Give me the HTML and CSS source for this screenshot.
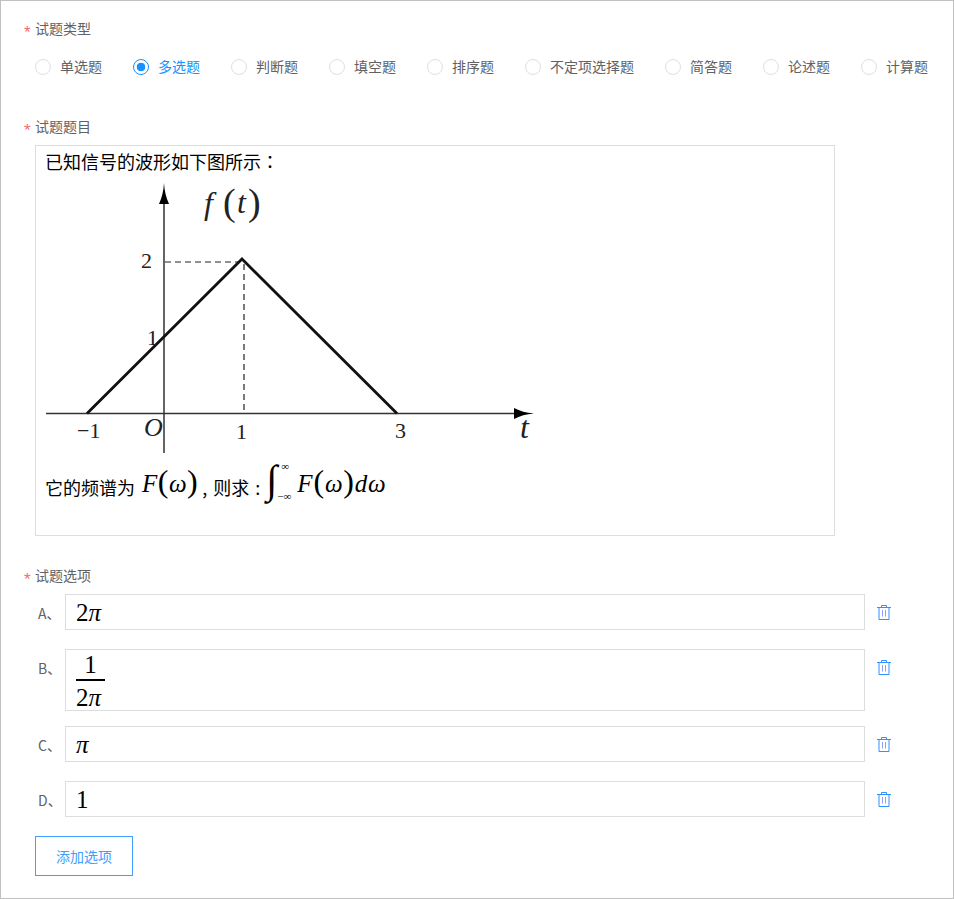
FILE: index.html
```html
<!DOCTYPE html>
<html lang="en">

<head>
    <meta charset="UTF-8">
    <meta name="viewport" content="width=device-width, initial-scale=1.0">
    <title>试题</title>
    <link rel="stylesheet" href="styles.css">
</head>

<body>
    <div class="frame">
        <div class="fieldLabel">试题类型</div>
        <div class="radioRow">
            <div class="radio"><span class="dot"></span>单选题</div>
            <div class="radio checked"><span class="dot"></span>多选题</div>
            <div class="radio"><span class="dot"></span>判断题</div>
            <div class="radio"><span class="dot"></span>填空题</div>
            <div class="radio"><span class="dot"></span>排序题</div>
            <div class="radio"><span class="dot"></span>不定项选择题</div>
            <div class="radio"><span class="dot"></span>简答题</div>
            <div class="radio"><span class="dot"></span>论述题</div>
            <div class="radio"><span class="dot"></span>计算题</div>
        </div>

        <div class="fieldLabel">试题题目</div>
        <div class="editor">
            <div class="line">已知信号的波形如下图所示<span class="colon">：</span></div>
            <svg class="graph" width="490" height="285" viewBox="46 175 490 285">
                <!-- axes -->
                <path d="M46 413.5H520M164 195V453" fill="none" stroke="#333" stroke-width="1.5" />
                <path d="M164 183C164.500 191 166 197 169 204H159C162 197 163.500 191 164 183Z" fill="#000" />
                <path d="M534 413.500C526 413 520 411 514 408V419C520 416 526 414 534 413.500Z" fill="#000" />
                <!-- dashes -->
                <path d="M165 262H240M244 264V413" fill="none" stroke="#222" stroke-width="1.2" stroke-dasharray="6 4" />
                <!-- wave -->
                <path d="M87 413.5L242 259L397 413.5" fill="none" stroke="#111" stroke-width="2.8" />
                <g class="tick">
                    <text x="141" y="268">2</text>
                    <text x="147" y="345">1</text>
                    <text x="77" y="438">−1</text>
                    <text x="236" y="439">1</text>
                    <text x="395" y="438">3</text>
                </g>
                <g class="tickIt">
                    <text x="144" y="436" class="mid">O</text>
                    <text x="520" y="438" class="big">t</text>
                    <text x="204" y="214" class="big">f</text>
                    <text x="237" y="213" class="big">t</text>
                </g>
                <text x="223" y="215" class="paren">(</text>
                <text x="248" y="215" class="paren">)</text>
            </svg>
            <div class="formula">
                <span class="low">它的频谱为</span>
                <span class="math first"><i>F</i><span class="par">(</span><i>ω</i><span class="par">)</span></span>
                <span class="low after">, 则求 :</span>
                <span class="integral">
                    <span class="intSign">∫</span>
                    <span class="limits"><span class="upper">∞</span><span>−∞</span></span>
                </span>
                <span class="math"><i>F</i><span class="par">(</span><i>ω</i><span class="par">)</span><i>d</i><i>ω</i></span>
            </div>
        </div>

        <div class="fieldLabel options">试题选项</div>
        <div class="option">
            <div class="key">A、</div>
            <div class="answer">2<i>π</i></div>
            <svg class="trash" width="14" height="16" viewBox="0 0 14 16"><path d="M0 3.5H14M4.5 3.5V1.5H9.5V3.5M2 3.5V15.5H12V3.5" fill="none" stroke="#3390ff" /><path d="M5.5 6V12.5M8.5 6V12.5" stroke="#8f9dff" /></svg>
        </div>
        <div class="option tall">
            <div class="key">B、</div>
            <div class="answer">
                <div class="frac"><span class="top">1</span><span class="bottom">2<i>π</i></span></div>
            </div>
            <svg class="trash" width="14" height="16" viewBox="0 0 14 16"><path d="M0 3.5H14M4.5 3.5V1.5H9.5V3.5M2 3.5V15.5H12V3.5" fill="none" stroke="#3390ff" /><path d="M5.5 6V12.5M8.5 6V12.5" stroke="#8f9dff" /></svg>
        </div>
        <div class="option">
            <div class="key">C、</div>
            <div class="answer"><i>π</i></div>
            <svg class="trash" width="14" height="16" viewBox="0 0 14 16"><path d="M0 3.5H14M4.5 3.5V1.5H9.5V3.5M2 3.5V15.5H12V3.5" fill="none" stroke="#3390ff" /><path d="M5.5 6V12.5M8.5 6V12.5" stroke="#8f9dff" /></svg>
        </div>
        <div class="option">
            <div class="key">D、</div>
            <div class="answer">1</div>
            <svg class="trash" width="14" height="16" viewBox="0 0 14 16"><path d="M0 3.5H14M4.5 3.5V1.5H9.5V3.5M2 3.5V15.5H12V3.5" fill="none" stroke="#3390ff" /><path d="M5.5 6V12.5M8.5 6V12.5" stroke="#8f9dff" /></svg>
        </div>
        <button class="addBtn">添加选项</button>
    </div>
</body>

</html>
```

FILE: styles.css
```css
body {
    margin: 0;
    font-family: "Noto Sans CJK SC", "Noto Sans", sans-serif;
    font-size: 14px;
    color: #606266;
    background-color: white;
}

.frame {
    box-sizing: border-box;
    width: 954px;
    height: 899px;
    padding: 17px 0 0 34px;
    border: 1px solid #c0c0c0;
}

.fieldLabel {
    position: relative;
    width: 56px;
    height: 20px;
    line-height: 20px;
    font-size: 14px;
    white-space: nowrap;
    margin-bottom: 9px;
}

.fieldLabel::before {
    content: "*";
    position: absolute;
    left: -11px;
    top: 5px;
    color: #f56c6c;
    font-family: "Liberation Sans", sans-serif;
    font-size: 17px;
}

.fieldLabel.options {
    margin-top: 29px;
}

.radioRow {
    display: flex;
    gap: 31px;
    height: 20px;
    margin: 18px 0 40px;
}

.radio {
    display: flex;
    align-items: center;
    line-height: 20px;
    font-size: 14px;
    white-space: nowrap;
}

.dot {
    box-sizing: border-box;
    width: 16px;
    height: 16px;
    margin: 2px 9px 0 0;
    border: 1px solid #dcdfe6;
    border-radius: 50%;
}

.radio.checked {
    color: #1890ff;
}

.radio.checked .dot {
    border-color: #1890ff;
    background: radial-gradient(circle, #1890ff 0 4px, white 4.6px);
}

.editor {
    box-sizing: border-box;
    width: 800px;
    height: 391px;
    padding: 4px 10px 0;
    border: 1px solid #ddd;
    color: black;
    font-size: 18px;
}

.line {
    height: 25px;
    line-height: 23px;
    margin-left: -1px;
}

.colon {
    font-family: "Noto Sans CJK TC", sans-serif;
}

.graph {
    display: block;
}

.graph text {
    font-family: "Liberation Serif", serif;
    font-size: 22px;
    fill: #222;
}

.graph .tickIt text {
    font-style: italic;
}

.graph .tickIt .mid {
    font-size: 26px;
}

.graph .tickIt .big {
    font-size: 32px;
}

.graph .paren {
    font-size: 38px;
    font-weight: normal;
}

.formula {
    display: flex;
    align-items: center;
    height: 46px;
    margin: 1px 0 0 -1px;
    white-space: nowrap;
}

.low {
    margin-top: 6px;
}

.math {
    font-family: "Liberation Serif", serif;
    font-size: 25px;
    letter-spacing: 0.8px;
    line-height: 40px;
}

.math.first {
    margin-left: 7px;
    letter-spacing: 0.5px;
}

.par {
    font-size: 32px;
    line-height: 32px;
}

.after {
    margin-left: 4px;
    word-spacing: 2px;
}

.integral {
    display: flex;
    align-items: center;
    width: 31px;
    margin-left: 6px;
    font-family: "Liberation Serif", serif;
}

.intSign {
    margin-top: -8px;
    font-size: 40px;
    line-height: 44px;
}

.limits {
    display: flex;
    flex-direction: column;
    justify-content: space-between;
    height: 42px;
    margin-top: -6px;
    font-size: 11px;
    line-height: 12px;
}

.limits .upper {
    margin-left: 4px;
}

.option {
    display: flex;
    align-items: flex-start;
    margin-bottom: 19px;
}

.option.tall {
    margin-bottom: 15px;
}

.key {
    width: 27px;
    height: 36px;
    padding-left: 3px;
    line-height: 38px;
    font-size: 14px;
}

.answer {
    box-sizing: border-box;
    width: 800px;
    min-height: 36px;
    padding: 2px 0 0 10px;
    border: 1px solid #ddd;
    color: black;
    font-family: "Liberation Serif", serif;
    font-size: 25px;
    line-height: 32px;
}

.frac {
    display: flex;
    flex-direction: column;
    width: 29px;
    margin-top: -2px;
    line-height: 29px;
}

.frac .top {
    border-bottom: 2px solid black;
    text-align: center;
}

.frac .bottom {
    height: 29px;
    line-height: 33px;
}

.trash {
    margin: 10px 0 0 12px;
}

.addBtn {
    box-sizing: border-box;
    display: block;
    width: 98px;
    height: 40px;
    padding: 0;
    border: 1px solid #409eff;
    background-color: white;
    color: #409eff;
    font-family: inherit;
    font-size: 14px;
}
```
